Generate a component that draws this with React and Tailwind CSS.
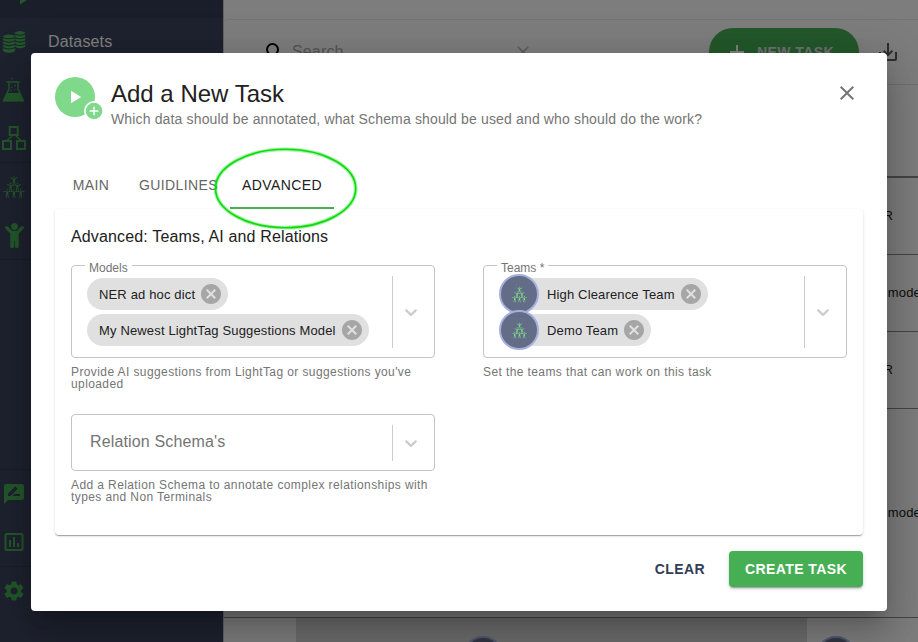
import { GiHumanPyramid } from "react-icons/gi";
import { FaChild } from "react-icons/fa";
import {
  MdRateReview,
  MdInsertChartOutlined,
  MdSettings,
  MdSearch,
  MdClear,
  MdAdd,
  MdSaveAlt,
  MdCancel,
  MdClose,
} from "react-icons/md";

function CoinStacks() {
  const left = [9.4, 12.8, 16.2, 19.6];
  const right = [6, 9.4, 12.8, 16.2];
  return (
    <svg width="28" height="28" viewBox="0 0 28 28" fill="currentColor">
      <path d="M14.8 4.6q5.2-3.4 10.4 0v14.2q-5.2 3-10.4 0z" />
      {right.map((y) => (
        <path key={y} d={`M14.6 ${y}q5.4 2.6 10.8 0`} fill="none" stroke="#3c445e" strokeWidth="1.1" />
      ))}
      <path d="M2.8 7.8q6.2-3.2 12.4 0v15.6q-6.2 3.4-12.4 0z" stroke="#3c445e" strokeWidth="0.5" />
      {left.map((y) => (
        <path key={y} d={`M2.6 ${y}q6.4 2.8 12.8 0`} fill="none" stroke="#3c445e" strokeWidth="1.1" />
      ))}
    </svg>
  );
}

function Flask() {
  return (
    <svg width="28" height="28" viewBox="0 0 28 28" fill="currentColor">
      <path d="M6.6 5.2h13v1.6h-13z" />
      <path d="M9 6.5v6.6L3.6 24.6h19.8L18 13.1V6.5" fill="none" stroke="currentColor" strokeWidth="1.4" />
      <path d="M6.6 17h13.8l3.4 8.4H2.8z" />
      <circle cx="12" cy="2.8" r="0.8" />
      <circle cx="15" cy="9.4" r="0.9" />
      <circle cx="11.8" cy="11.4" r="0.7" />
      <circle cx="14.6" cy="13.6" r="0.7" />
      <circle cx="11" cy="14.8" r="0.8" />
    </svg>
  );
}

function Boxes() {
  return (
    <svg width="28" height="28" viewBox="0 0 28 28" fill="none" stroke="currentColor" strokeWidth="2">
      <rect x="9.7" y="3" width="8" height="8" />
      <rect x="3" y="17" width="8" height="8" />
      <rect x="17" y="17" width="8" height="8" />
      <path d="M12 12l-5 4.5M16 12l5 4.5" strokeWidth="1.3" />
    </svg>
  );
}

function NavItem({ icon, label }) {
  return (
    <div className="flex h-12 items-center gap-5">
      <span className="flex w-7 shrink-0 justify-center">{icon}</span>
      {label && <span className="text-base tracking-[0.15px] text-white">{label}</span>}
    </div>
  );
}

function Sidebar() {
  return (
    <nav className="flex w-[223px] shrink-0 flex-col bg-[#3c445e] text-[#46af54]">
      <div className="h-[18px] overflow-hidden bg-[#343c54] pl-5">
        <svg width="8" height="5" viewBox="0 0 8 5" fill="currentColor">
          <path d="M0 0h7L0 4.4z" />
        </svg>
      </div>
      <NavItem icon={<CoinStacks />} label="Datasets" />
      <NavItem icon={<Flask />} />
      <NavItem icon={<Boxes />} />
      <div className="h-px bg-[#343a52]" />
      <NavItem icon={<GiHumanPyramid size={24} />} />
      <NavItem icon={<FaChild size={25} />} />
      <div className="h-px bg-[#343a52]" />
      <div className="h-[209px]" />
      <div className="h-px bg-[#343a52]" />
      <NavItem icon={<MdRateReview size={24} />} />
      <NavItem icon={<MdInsertChartOutlined size={24} />} />
      <div className="h-px bg-[#343a52]" />
      <NavItem icon={<MdSettings size={24} />} />
    </nav>
  );
}

function TeamAvatar() {
  return (
    <span className="flex size-10 shrink-0 items-center justify-center rounded-full border-2 border-[#a5b1dc] bg-[#646d87] text-[#80d98b]">
      <GiHumanPyramid size={17} />
    </span>
  );
}

function TableRow({ height, text, pad }) {
  return (
    <div className={`flex items-center justify-end border-b border-[#8a8a8a] text-[13px] tracking-[0.15px] text-[#212121] ${height}`}>
      <span className={pad}>{text}</span>
    </div>
  );
}

function Workspace() {
  return (
    <main className="flex min-w-0 flex-1 flex-col border-l border-[#c8c8c8] bg-[#fafafa]">
      <div className="h-[19px] shrink-0" />
      <section className="flex flex-1 flex-col rounded-tl border-t border-[#e6e6e6]">
        <div className="flex h-[65px] shrink-0 items-center border-b border-[#e0e0e0] pb-px pl-[39px]">
          <MdSearch size={24} className="text-black" />
          <span className="ml-[5px] w-[221px] text-base tracking-[0.15px] text-[#a8a8a8]">Search</span>
          <MdClear size={20} className="text-[#b8b8b8]" />
          <button className="ml-44 flex h-12 w-[150px] items-center justify-center gap-2 rounded-full bg-[#46af54] pt-px pr-[9px] text-[14px] font-bold tracking-[0.4px] text-[#e0e0e0] shadow-lg">
            <MdAdd size={24} className="text-white" />
            NEW TASK
          </button>
          <MdSaveAlt size={24} className="ml-[17px] text-[#5c5c5c]" />
        </div>
        <div className="h-[93px] shrink-0 border-b-2 border-[#8a8a8a]" />
        <TableRow height="h-[77px]" text="R" pad="mr-[25px]" />
        <TableRow height="h-[77px]" text="model" pad="-mr-[6px]" />
        <TableRow height="h-[77px]" text="R" pad="mr-[25px]" />
        <TableRow height="h-[209px]" text="model" pad="-mr-[6px]" />
        <div className="flex h-6 overflow-hidden">
          <div className="w-[72px]" />
          <div className="flex w-[511px] justify-center bg-[#d8d8d8] pt-[18px] pr-[137px]">
            <TeamAvatar />
          </div>
          <div className="flex-1 pt-[18px] pl-[9px]">
            <TeamAvatar />
          </div>
        </div>
      </section>
    </main>
  );
}

function Chip({ label, avatar }) {
  return (
    <div className="flex h-8 items-center rounded-full bg-[#e0e0e0] pr-[5px]">
      {avatar && (
        <span className="-ml-1 -mr-1">
          <TeamAvatar />
        </span>
      )}
      <span className="pt-px pr-1 pl-3 text-[13px] tracking-[0.15px] whitespace-nowrap text-[#212121]">{label}</span>
      <MdCancel size={24} className="text-[#a6a6a6]" />
    </div>
  );
}

function SelectField({ label, helper, placeholder, avatars, children }) {
  return (
    <div className="flex w-[364px] flex-col gap-2">
      <div className="relative flex rounded border border-[#c4c4c4] py-[10px] pl-[15px]">
        {label && (
          <span className="absolute -top-1 left-[13px] bg-white px-1 text-[12px] leading-[12px] whitespace-nowrap text-[#757575]">
            {label}
          </span>
        )}
        {placeholder ? (
          <div className="flex h-[35px] flex-1 items-center pb-0.5 pl-[3px] text-base tracking-[0.15px] text-[#757575]">
            {placeholder}
          </div>
        ) : (
          <div className={`flex flex-1 flex-col items-start gap-1 pt-0.5 pb-px ${avatars ? "pl-1" : ""}`}>{children}</div>
        )}
        <div className="mb-[-1px] w-px bg-[#cccccc]" />
        <div className="flex w-[41px] items-center pl-2">
          <svg width="20" height="20" viewBox="0 0 20 20" className="fill-[#cccccc]">
            <path d="M4.516 7.548c0.436-0.446 1.043-0.481 1.576 0l3.908 3.747 3.908-3.747c0.533-0.481 1.141-0.446 1.574 0 0.436 0.445 0.408 1.197 0 1.615-0.406 0.418-4.695 4.502-4.695 4.502-0.217 0.223-0.502 0.335-0.787 0.335s-0.57-0.112-0.789-0.335c0 0-4.287-4.084-4.695-4.502s-0.436-1.17 0-1.615z" />
          </svg>
        </div>
      </div>
      <p className="text-[12px] leading-[12px] tracking-[0.4px] text-[#757575]">{helper}</p>
    </div>
  );
}

function TaskDialog() {
  return (
    <div className="flex h-[558px] w-[856px] flex-col rounded bg-white p-6 shadow-[0_11px_15px_-7px_rgba(0,0,0,0.2),0_24px_38px_3px_rgba(0,0,0,0.14),0_9px_46px_8px_rgba(0,0,0,0.12)]">
      <header className="flex h-[84px] items-start">
        <svg width="48" height="44" viewBox="0 0 48 44">
          <circle cx="20" cy="20" r="20" fill="#80d98b" />
          <path d="M16 13.7v12.6L26.2 20z" fill="#fff" />
          <circle cx="39" cy="34" r="10" fill="#fff" />
          <circle cx="39" cy="34" r="8.3" fill="#80d98b" />
          <path d="M39 29.7v8.6M34.7 34h8.6" stroke="#fff" strokeWidth="1.4" />
        </svg>
        <div className="ml-2 flex-1">
          <h2 className="pt-px text-[24px] leading-8 text-[#212121]">Add a New Task</h2>
          <p className="-mt-px text-[14px] leading-5 tracking-[0.15px] text-[#757575]">
            Which data should be annotated, what Schema should be used and who should do the work?
          </p>
        </div>
        <MdClose size={24} className="mt-1 mr-1 text-[#757575]" />
      </header>
      <div className="flex h-12 shrink-0 text-[14px] tracking-[0.4px] text-[#666666]">
        <div className="flex w-[72px] items-center justify-center">MAIN</div>
        <div className="flex w-[103px] items-center justify-center">GUIDLINES</div>
        <div className="relative flex w-[104px] items-center justify-center text-[#212121]">
          ADVANCED
          <span className="absolute inset-x-0 bottom-0 h-0.5 bg-[#46af54]" />
          <svg className="absolute -top-[14px] -left-[17px] z-10" width="146" height="84" viewBox="0 0 146 84" fill="none">
            <ellipse cx="72.6" cy="41.5" rx="70.1" ry="39.2" stroke="#00d900" strokeOpacity="0.35" strokeWidth="3.8" />
            <ellipse cx="72.6" cy="41.5" rx="70.1" ry="39.2" stroke="#0bdc0b" strokeWidth="1.6" />
          </svg>
        </div>
      </div>
      <section className="h-[326px] shrink-0 rounded bg-white p-4 shadow-[0_2px_1px_-1px_rgba(0,0,0,0.2),0_1px_1px_0_rgba(0,0,0,0.14),0_1px_3px_0_rgba(0,0,0,0.12)]">
        <h3 className="text-base tracking-[0.15px] text-[#212121]">Advanced: Teams, AI and Relations</h3>
        <div className="mt-4 flex flex-wrap items-start gap-x-12 gap-y-6">
          <SelectField label="Models" helper="Provide AI suggestions from LightTag or suggestions you've uploaded">
            <Chip label="NER ad hoc dict" />
            <Chip label="My Newest LightTag Suggestions Model" />
          </SelectField>
          <SelectField label="Teams *" helper="Set the teams that can work on this task" avatars>
            <Chip label="High Clearence Team" avatar />
            <Chip label="Demo Team" avatar />
          </SelectField>
          <SelectField
            placeholder="Relation Schema's"
            helper="Add a Relation Schema to annotate complex relationships with types and Non Terminals"
          />
        </div>
      </section>
      <footer className="mt-4 flex h-9 shrink-0 justify-end gap-2 text-[14px] font-bold tracking-[0.4px]">
        <button className="px-4 text-[#323c58]">CLEAR</button>
        <button className="w-[134px] rounded bg-[#46af54] whitespace-nowrap text-white shadow-[0_3px_1px_-2px_rgba(0,0,0,0.2),0_2px_2px_0_rgba(0,0,0,0.14),0_1px_5px_0_rgba(0,0,0,0.12)]">
          CREATE TASK
        </button>
      </footer>
    </div>
  );
}

export default function App() {
  return (
    <div className="relative flex h-[642px] w-[918px] overflow-hidden font-['Liberation_Sans',Arial,sans-serif]">
      <Sidebar />
      <Workspace />
      <div className="absolute inset-0 z-10 flex items-start bg-black/50 pt-[53px] pl-[31px]">
        <TaskDialog />
      </div>
    </div>
  );
}
